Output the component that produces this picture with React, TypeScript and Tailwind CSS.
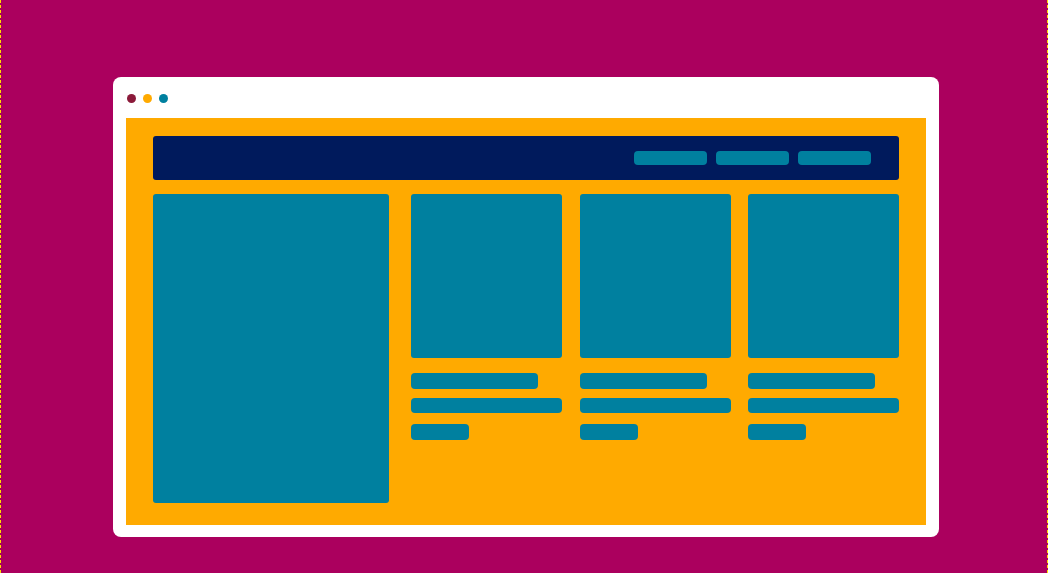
export default function App() {
  return (
    <div className="h-[573px] w-full overflow-hidden border-x border-dashed border-[#ffe100] bg-[#ab005e] pl-[112px] pt-[77px]">
      <div className="flex h-[460px] w-[826px] flex-col rounded-[8px] bg-white px-[13px] pb-[12px]">
        <div className="flex h-[41px] items-center gap-[7px] pl-[1px] pt-[2px]">
          <span className="h-[9px] w-[9px] rounded-full bg-[#8b1a3a]" />
          <span className="h-[9px] w-[9px] rounded-full bg-[#ffaa00]" />
          <span className="h-[9px] w-[9px] rounded-full bg-[#00809f]" />
        </div>
        <div className="flex flex-1 flex-col bg-[#ffaa00] px-[27px] pt-[18px] pb-[22px]">
          <div className="flex h-[44px] items-center justify-end gap-[9px] rounded-[3px] bg-[#001a5c] pr-[28px]">
            <span className="h-[14px] w-[73px] rounded-[4px] bg-[#00809f]" />
            <span className="h-[14px] w-[73px] rounded-[4px] bg-[#00809f]" />
            <span className="h-[14px] w-[73px] rounded-[4px] bg-[#00809f]" />
          </div>
          <div className="mt-[14px] flex flex-1">
            <div className="w-[236px] rounded-[3px] bg-[#00809f]" />
            <div className="ml-[22px] flex">
              <Card />
              <div className="ml-[18px]">
                <Card />
              </div>
              <div className="ml-[17px]">
                <Card />
              </div>
            </div>
          </div>
        </div>
      </div>
    </div>
  );
}

function Card() {
  return (
    <div className="flex w-[151px] flex-col">
      <div className="h-[164px] rounded-[3px] bg-[#00809f]" />
      <div className="mt-[15px] h-[16px] w-[127px] rounded-[4px] bg-[#00809f]" />
      <div className="mt-[9px] h-[15px] w-full rounded-[4px] bg-[#00809f]" />
      <div className="mt-[11px] h-[16px] w-[58px] rounded-[4px] bg-[#00809f]" />
    </div>
  );
}
